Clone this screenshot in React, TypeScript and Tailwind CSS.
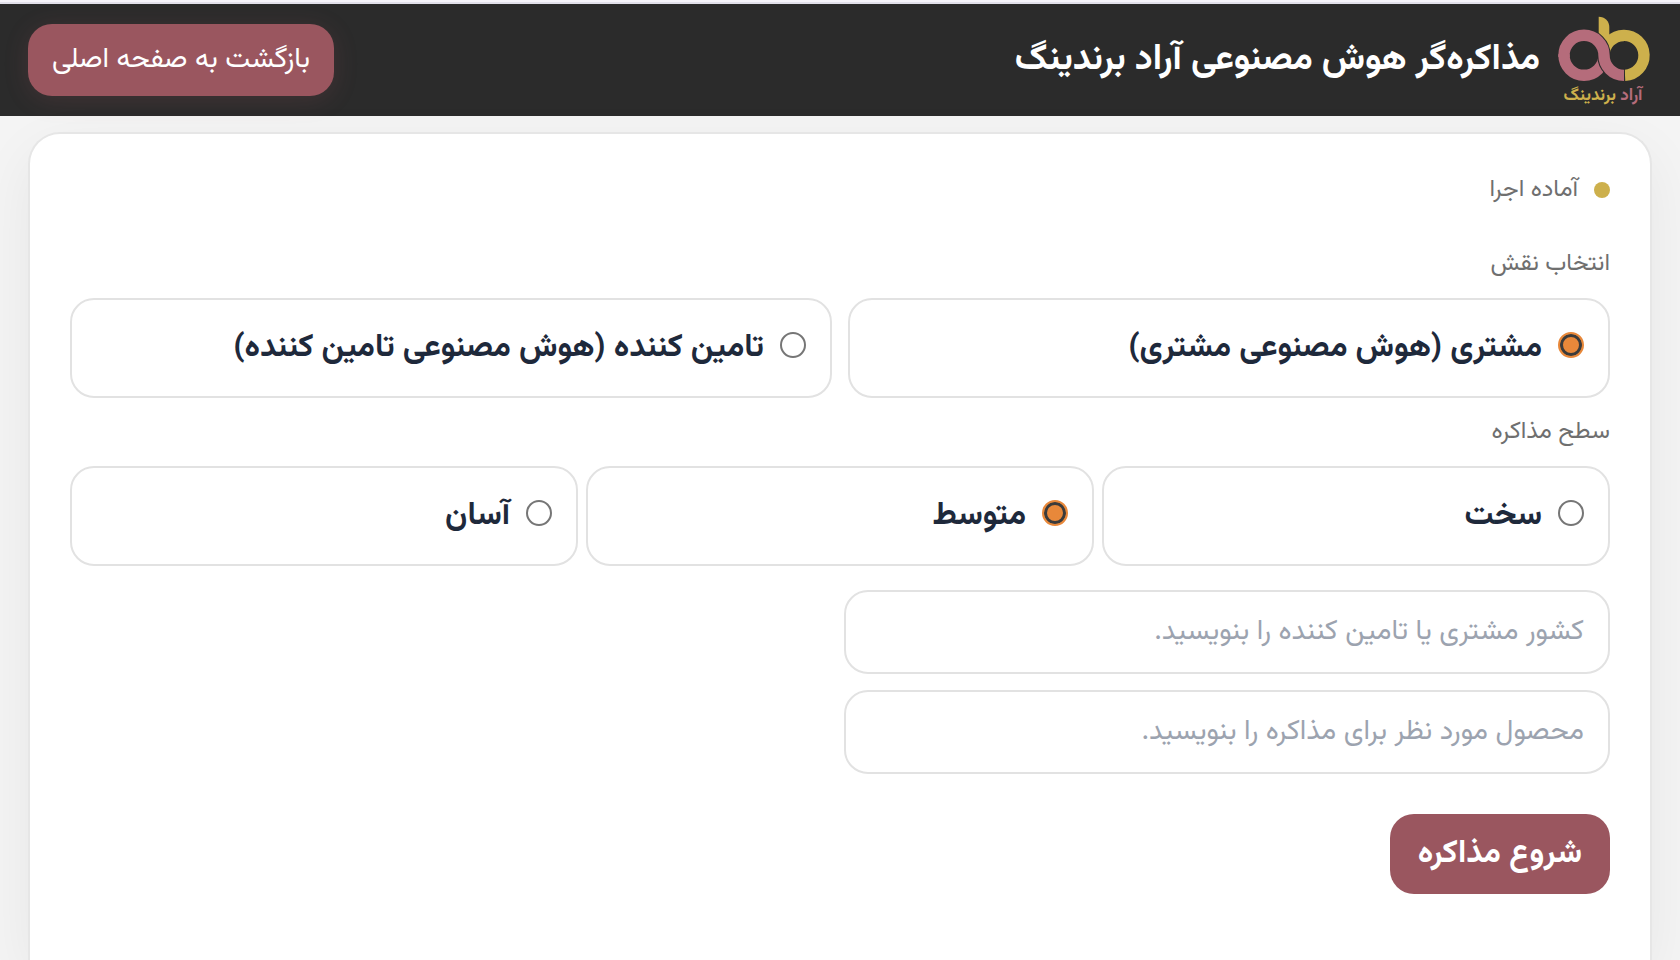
import { useState } from "react";

const roles = [
  { value: "customer", label: "مشتری (هوش مصنوعی مشتری)" },
  { value: "supplier", label: "تامین کننده (هوش مصنوعی تامین کننده)" },
];

const levels = [
  { value: "hard", label: "سخت" },
  { value: "medium", label: "متوسط" },
  { value: "easy", label: "آسان" },
];

type OptionProps = {
  name: string;
  value: string;
  label: string;
  checked: boolean;
  onChange: (value: string) => void;
};

function Option({ name, value, label, checked, onChange }: OptionProps) {
  return (
    <label className="flex flex-1 items-start gap-4 rounded-3xl border-2 border-[#e2e2e2] px-6 py-6 cursor-pointer">
      <input
        type="radio"
        name={name}
        value={value}
        checked={checked}
        onChange={() => onChange(value)}
        className="mt-2 size-[26px] shrink-0 appearance-none rounded-full border-2 border-[#767676] bg-white checked:border-[#e8883a] checked:bg-[#e8883a] checked:shadow-[inset_0_0_0_3px_#3b3b3b]"
      />
      <span className="text-[32px] leading-[48px] font-bold text-[#1e293b]">{label}</span>
    </label>
  );
}

function Logo() {
  return (
    <svg viewBox="0 0 96 96" className="size-24 shrink-0" role="img" aria-label="آراد برندینگ">
      {/* b */}
      <path d="M42.7 4.7C49 4.7 53.3 9 53.3 15V44H42.7Z" fill="#cdb04c" />
      <path d="M69 63.4A20 20 0 1 0 48 43.3" fill="none" stroke="#cdb04c" strokeWidth="11.4" />
      {/* a */}
      <path d="M8 42.3V43.3A20 20 0 0 0 48 43.3" fill="none" stroke="#b56c7b" strokeWidth="11.4" />
      <path d="M28 23.3A20 20 0 0 1 48 43.3A20 20 0 0 0 68.8 63.4" fill="none" stroke="#2b2b2b" strokeWidth="13.4" />
      <path d="M8 45V43.3A20 20 0 0 1 48 43.3A20 20 0 0 0 68 63.4" fill="none" stroke="#b56c7b" strokeWidth="11.4" />
      <text x="47" y="88" textAnchor="middle" direction="rtl" fontSize="17" fontWeight="700" fill="#cdb04c">
        <tspan fill="#b56c7b">آراد</tspan> برندینگ
      </text>
    </svg>
  );
}

export default function App() {
  const [role, setRole] = useState("customer");
  const [level, setLevel] = useState("medium");
  const [country, setCountry] = useState("");
  const [product, setProduct] = useState("");

  const handleBack = () => {
    window.history.back();
  };

  return (
    <div dir="rtl" className="flex h-screen flex-col overflow-hidden bg-[#f4f4f4] font-[Vazirmatn,'Noto_Sans',sans-serif]">
      <div className="h-1 shrink-0 border-b-2 border-[#e2e0ea] bg-[#f6f4fa]" />

      {/* Header */}
      <header className="flex h-28 shrink-0 items-center justify-between bg-[#2b2b2b] px-7">
        <div className="flex items-center gap-4">
          <Logo />
          <h1 className="text-4xl font-bold text-white">مذاکره‌گر هوش مصنوعی آراد برندینگ</h1>
        </div>
        <button
          type="button"
          onClick={handleBack}
          className="h-[72px] rounded-3xl bg-[#9a565f] px-6 text-[28px] text-white shadow-[0_4px_24px_rgba(154,86,95,0.2)]"
        >
          بازگشت به صفحه اصلی
        </button>
      </header>

      {/* Form card */}
      <main className="flex-1 px-7 pt-4">
        <form className="h-full rounded-t-4xl border-2 border-b-0 border-[#e6e6e6] bg-white px-10 pt-9 shadow-[0_20px_60px_rgba(0,0,0,0.06)]">
          <div className="flex items-center gap-4">
            <span className="size-4 rounded-full bg-[#cdb04c]" />
            <span className="text-2xl leading-10 text-[#6f6f6f]">آماده اجرا</span>
          </div>

          {/* Role */}
          <fieldset className="mt-9">
            <legend className="text-2xl leading-9 text-[#6f6f6f]">انتخاب نقش</legend>
            <div className="mt-4 flex gap-4">
              {roles.map((r) => (
                <Option key={r.value} name="role" {...r} checked={role === r.value} onChange={setRole} />
              ))}
            </div>
          </fieldset>

          {/* Level */}
          <fieldset className="mt-4">
            <legend className="text-2xl leading-9 text-[#6f6f6f]">سطح مذاکره</legend>
            <div className="mt-4 flex gap-2">
              {levels.map((l) => (
                <Option key={l.value} name="level" {...l} checked={level === l.value} onChange={setLevel} />
              ))}
            </div>
          </fieldset>

          <div className="mt-6 grid grid-cols-2 gap-2">
            <div className="flex flex-col gap-4">
              <input
                type="text"
                aria-label="کشور"
                value={country}
                onChange={(e) => setCountry(e.target.value)}
                placeholder="کشور مشتری یا تامین کننده را بنویسید."
                className="h-[84px] w-full rounded-3xl border-2 border-[#e2e2e2] px-6 text-[28px] text-[#1e293b] placeholder:text-[#9ca3af]"
              />
              <input
                type="text"
                aria-label="محصول"
                value={product}
                onChange={(e) => setProduct(e.target.value)}
                placeholder="محصول مورد نظر برای مذاکره را بنویسید."
                className="h-[84px] w-full rounded-3xl border-2 border-[#e2e2e2] px-6 text-[28px] text-[#1e293b] placeholder:text-[#9ca3af]"
              />
            </div>
          </div>

          <button
            type="button"
            className="mt-10 h-20 rounded-3xl bg-[#9a565f] px-7 text-[32px] font-bold text-white"
          >
            شروع مذاکره
          </button>
        </form>
      </main>
    </div>
  );
}
